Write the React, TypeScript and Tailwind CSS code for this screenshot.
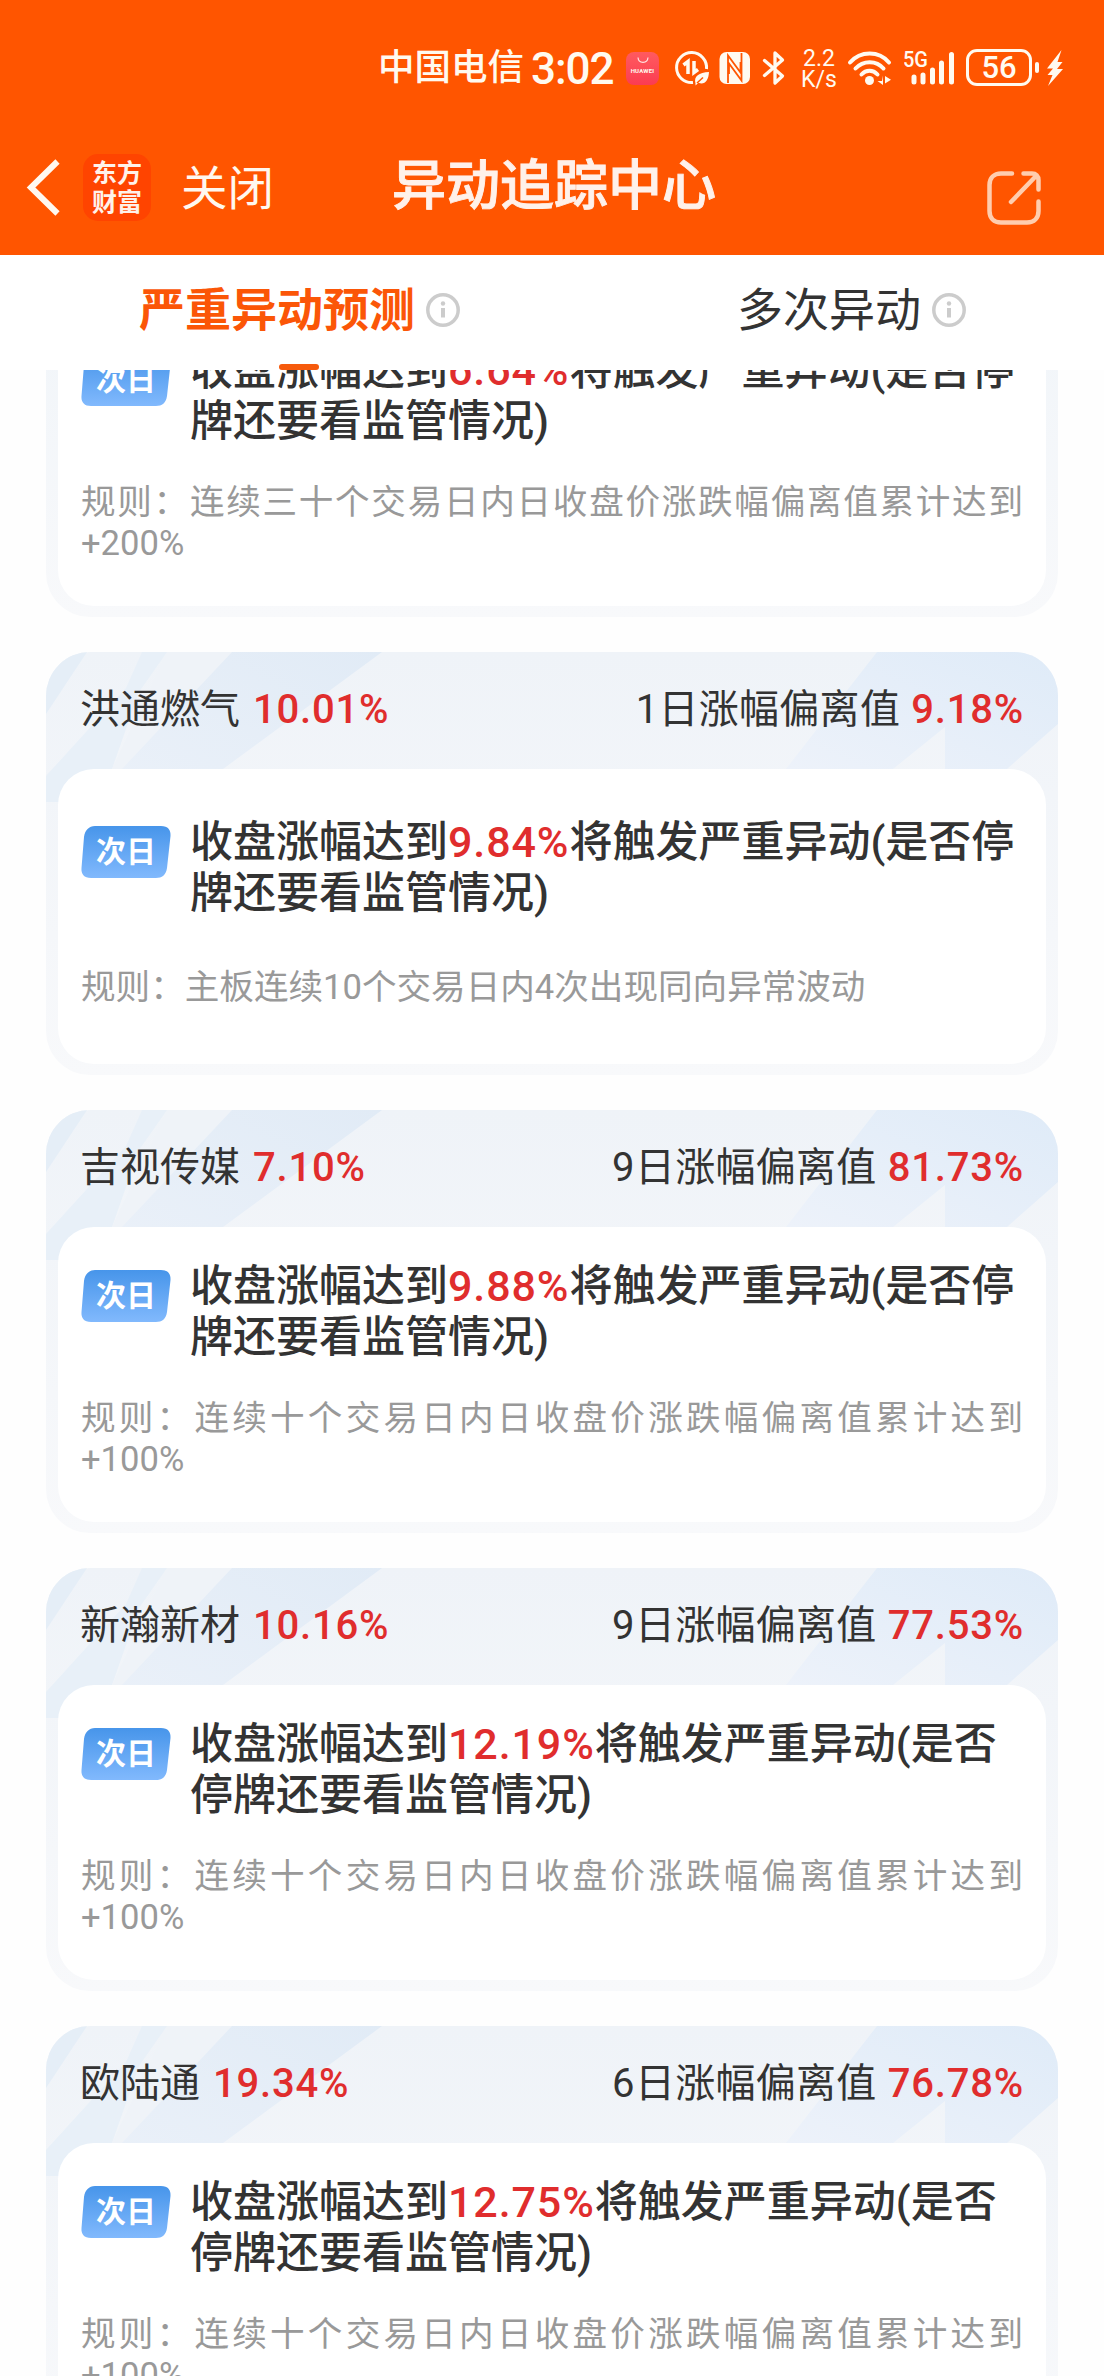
import React from 'react';

// One stock card in the list
interface StockAlert {
  name: string;
  change: string;
  days: number;
  deviation: string;
  trigger: string;
  rule: string;
}

// The card on top is scrolled under the tabs, only its body is visible
const SCROLLED_ALERT = {
  trigger: '6.64%',
  rule: '连续三十个交易日内日收盘价涨跌幅偏离值累计达到+200%',
};

const ALERTS: StockAlert[] = [
  { name: '洪通燃气', change: '10.01%', days: 1, deviation: '9.18%', trigger: '9.84%', rule: '主板连续10个交易日内4次出现同向异常波动' },
  { name: '吉视传媒', change: '7.10%', days: 9, deviation: '81.73%', trigger: '9.88%', rule: '连续十个交易日内日收盘价涨跌幅偏离值累计达到+100%' },
  { name: '新瀚新材', change: '10.16%', days: 9, deviation: '77.53%', trigger: '12.19%', rule: '连续十个交易日内日收盘价涨跌幅偏离值累计达到+100%' },
  { name: '欧陆通', change: '19.34%', days: 6, deviation: '76.78%', trigger: '12.75%', rule: '连续十个交易日内日收盘价涨跌幅偏离值累计达到+100%' },
];

const StatusBar: React.FC = () => (
  <div className="flex h-[135px] items-center pl-[378px] font-medium text-[#fffaf0]">
    <span className="mt-[2px] w-[153px] whitespace-nowrap text-[36.5px] leading-none">中国电信</span>
    <span className="mt-[2px] w-[95px] whitespace-nowrap text-[44px] leading-none tracking-[-1px]">3:02</span>

    {/* Huawei store */}
    <div className="mt-[2px] flex h-[33px] w-[33px] flex-col items-center rounded-[8px] bg-linear-to-b from-[#ff5a5f] to-[#fb3b52]">
      <svg className="mt-[5px]" width="12" height="7" viewBox="0 0 12 7" fill="none" stroke="#ffe3e0" strokeWidth="1.2">
        <path d="M1 0.5C1.5 7 10.500 7 11 0.5" />
      </svg>
      <span className="mt-[4px] text-[6px] font-bold leading-none tracking-[0.2px]">HUAWEI</span>
    </div>

    {/* Data saver */}
    <svg className="ml-[15px]" width="36" height="36" viewBox="0 0 36 36" fill="none" stroke="currentColor" strokeWidth="3">
      <path d="M19 32.500A15 15 0 1 1 32.500 19" />
      <path d="M9.500 15L14 11.500V24" strokeWidth="3.500" />
      <path d="M20 11V22.500L24 19.500" strokeWidth="3.500" />
      <path d="M21.500 33.500C19.500 26 25 22.500 35 22C34.500 31 30.500 35 24.500 32.800L21.500 35.500Z" fill="currentColor" stroke="none" />
      <path d="M23 33L29 27.500" stroke="#ff5500" strokeWidth="1.500" />
    </svg>

    {/* NFC */}
    <svg className="ml-[9px]" width="32" height="34" viewBox="0 0 32 34">
      <rect x="0.500" y="1" width="30.500" height="32" rx="7" fill="currentColor" />
      <path d="M9 32V4.500L21.500 21.500V11M22.500 2V29.500L10 12.500V23" stroke="#ff5500" strokeWidth="1.800" fill="none" />
    </svg>

    {/* Bluetooth */}
    <svg className="ml-[11px]" width="24" height="36" viewBox="0 0 24 36" fill="none" stroke="currentColor" strokeWidth="3.300" strokeLinejoin="round" strokeLinecap="round">
      <path d="M2.500 10.500L20.500 26L13 33V3L20.500 10L2.500 25.500" />
    </svg>

    <div className="ml-[14px] mt-[3px] w-[38px] text-center text-[23px] font-normal leading-[21px]">
      <div>2.2</div>
      <div>K/s</div>
    </div>

    {/* Wifi */}
    <svg className="ml-[9px]" width="46" height="36" viewBox="0 0 46 36" fill="none" stroke="currentColor" strokeWidth="4" strokeLinecap="round">
      <path d="M3 12.500C13.500 0.500 32 0.500 42 12.500" />
      <path d="M8.500 18.500C16 10 29.500 10 36.500 18.500" />
      <path d="M14.500 24.500C19 19.500 26 19.500 30.500 24.500" />
      <circle cx="22.500" cy="30.500" r="4.500" fill="currentColor" stroke="none" />
      <path d="M36 25.500V35L30.500 31H35M38 35V26L44 29.800L38 33.500Z" fill="currentColor" stroke="none" />
    </svg>

    {/* Signal */}
    <svg className="ml-[11px]" width="52" height="37" viewBox="0 0 52 37" fill="none" stroke="currentColor" strokeWidth="5" strokeLinecap="round">
      <text x="-1" y="18" fontSize="22.500" fill="currentColor" stroke="none" textLength="25" lengthAdjust="spacingAndGlyphs">5G</text>
      <path d="M10 28V33M19 26V33M28.500 21V33M37.500 14V33M47.500 5.500V33" />
    </svg>

    {/* Battery */}
    <div className="ml-[10px] flex h-[37px] w-[66px] items-center justify-center rounded-[11px] border-3 border-current text-[31px] font-medium leading-none">56</div>
    <div className="ml-[3px] h-[11px] w-[4px] rounded-full bg-current" />
    <svg className="ml-[7px]" width="18" height="38" viewBox="0 0 18 38" fill="currentColor">
      <path d="M15.500 1L1 19.500H7L1.500 26H6.500L2 37L17 20H11L16.500 13H11.500Z" />
    </svg>
  </div>
);

const NavBar: React.FC = () => (
  <div className="grid h-[120px] grid-cols-[392px_1fr_392px]">
    <div className="flex pl-[24px]">
      <svg className="mt-[23px]" width="36" height="58" viewBox="0 0 36 58" fill="none" stroke="#fff8ef" strokeWidth="6">
        <path d="M33.500 3.500L7 29.500L33.500 55.500" />
      </svg>
      <div className="ml-[23px] mt-[19px] flex h-[67px] w-[68px] flex-col items-center justify-center rounded-[15px] bg-[#ff4400] text-[25px] font-bold leading-[29px] text-[#fff2ea]">
        <span>东方</span>
        <span>财富</span>
      </div>
      <span className="ml-[30px] mt-[31px] whitespace-nowrap text-[46.5px] leading-[46px] text-[#fff8ef]">关闭</span>
    </div>
    <h1 className="mt-[25px] whitespace-nowrap text-center text-[54px] font-medium leading-[54px] text-[#fff1ea] [-webkit-text-stroke:0.9px_#fff1ea]">异动追踪中心</h1>
    <div className="flex justify-end pr-[65px]">
      <svg className="mt-[35px]" width="56" height="56" viewBox="0 0 56 56" fill="none" stroke="#ffcdae" strokeWidth="4.500" strokeLinecap="round" strokeLinejoin="round">
        <path d="M25 3.500H14C7 3.500 2.500 8 2.500 15V41C2.500 48 7 52.500 14 52.500H40C47 52.500 51.500 48 51.500 41V31.500" />
        <path d="M36.500 3.500H45C49 3.500 51.500 6 51.500 10V19.500M49.500 5.500L24 32" />
      </svg>
    </div>
  </div>
);

const InfoIcon: React.FC = () => (
  <svg className="ml-[10px] mt-[5px]" width="36" height="36" viewBox="0 0 36 36" fill="none" stroke="#cccccc" strokeWidth="3.500">
    <circle cx="18" cy="18" r="15.200" />
    <path d="M18 16V25.500" strokeWidth="4" />
    <circle cx="18" cy="11.500" r="2.200" fill="#cccccc" stroke="none" />
  </svg>
);

const Tabs: React.FC = () => (
  <div className="relative z-10 flex h-[115px] bg-white text-[46px] leading-[46px]">
    <div className="flex w-[600px] flex-col pl-[139px]">
      <div className="mt-[32px] flex text-[#fb5607]">
        <span className="font-bold">严重异动预测</span>
        <InfoIcon />
      </div>
      <div className="ml-[140px] mt-auto h-[6px] w-[40px] rounded-full bg-[#f65a0c]" />
    </div>
    <div className="flex pl-[137px] pt-[32px] text-[#333333]">
      <span>多次异动</span>
      <InfoIcon />
    </div>
  </div>
);

// Pale diagonal rays behind the card header
const CardRays: React.FC = () => (
  <svg className="absolute inset-0" width="1012" height="150" viewBox="0 0 1012 150">
    <defs>
      <linearGradient id="rayRight" x1="1" y1="0" x2="0" y2="1">
        <stop offset="0" stopColor="#dfebf8" />
        <stop offset="1" stopColor="#edf2fa" />
      </linearGradient>
      <linearGradient id="rayLeft" x1="1" y1="0" x2="0" y2="1">
        <stop offset="0" stopColor="#e1ebf6" />
        <stop offset="1" stopColor="#ebf1f9" />
      </linearGradient>
    </defs>
    <path d="M0 0H41L0 62Z" fill="#e5eef7" />
    <path d="M96 0H121L93 40L66 117L60 150H0V124L80 36Z" fill="#e8f0f8" />
    <path d="M121 0L66 117H80L186 0Z" fill="#eff3f8" />
    <path d="M186 0H336L177 117L130 150H60L76 117Z" fill="url(#rayLeft)" />
    <path d="M831 0H1012V72L961 117H899V75L847 117H740Z" fill="url(#rayRight)" />
  </svg>
);

const NextDayBadge: React.FC = () => (
  <div className="relative mt-[9px] flex h-[52px] w-[90px] shrink-0 items-center justify-center">
    <svg className="absolute inset-0" width="90" height="52" viewBox="0 0 90 52">
      <defs>
        <linearGradient id="badge" x1="0" y1="0" x2="0" y2="1">
          <stop offset="0" stopColor="#4795ea" />
          <stop offset="1" stopColor="#81b9fd" />
        </linearGradient>
      </defs>
      <path d="M14 0H80C87 0 90 4 89.500 10L86 42C85 49 81 52 75 52H10C3 52 0 48 0.500 42L3 11C4 4 8 0 14 0Z" fill="url(#badge)" />
    </svg>
    <span className="relative text-[30px] font-bold leading-none text-white">次日</span>
  </div>
);

const AlertBody: React.FC<{ trigger: string; rule: string }> = ({ trigger, rule }) => (
  <div className="relative flex h-[295px] flex-col justify-evenly rounded-[36px] bg-white px-[23px] pb-[8px]">
    <div className="flex gap-[19px]">
      <NextDayBadge />
      <p className="-mr-[4px] text-[43px] font-medium leading-[51px] text-[#333333]">
        收盘涨幅达到<span className="tracking-[0.9px] text-[#e02d2d]">{trigger}</span>将触发严重异动(是否停牌还要看监管情况)
      </p>
    </div>
    <p className="text-justify text-[34.600px] leading-[41px] text-[#999999]">规则：{rule}</p>
  </div>
);

const AlertCard: React.FC<{ alert: StockAlert }> = ({ alert }) => (
  <div className="relative h-[423px] shrink-0 overflow-hidden rounded-[44px] bg-linear-to-b from-[#eff3f8] to-[#f8f9fb] px-[12px]">
    <CardRays />
    <div className="relative flex h-[117px] items-center justify-between px-[22px] pb-[2px] text-[40px] text-[#333333]">
      <div className="flex gap-[13px]">
        <span>{alert.name}</span>
        <span className="font-medium tracking-[0.8px] text-[#e02d2d]">{alert.change}</span>
      </div>
      <div className="flex gap-[11px]">
        <span className="tracking-[0.3px]">{alert.days}日涨幅偏离值</span>
        <span className="font-medium tracking-[0.8px] text-[#e02d2d]">{alert.deviation}</span>
      </div>
    </div>
    <AlertBody trigger={alert.trigger} rule={alert.rule} />
  </div>
);

const App: React.FC = () => {
  return (
    <div lang="zh-CN" className="flex h-[2376px] w-[1104px] flex-col overflow-hidden bg-[#fefefe] font-['Roboto','Noto_Sans_CJK_SC',sans-serif]">
      <header className="h-[255px] shrink-0 bg-[#ff5500]">
        <StatusBar />
        <NavBar />
      </header>
      <Tabs />
      <main className="flex min-h-0 flex-1 flex-col overflow-hidden px-[46px]">
        <div className="-mt-[59px] flex flex-col gap-[35px]">
          <div className="rounded-b-[44px] bg-linear-to-b from-[#f1f5f9] to-[#f8f9fb] px-[12px] pb-[11px]">
            <AlertBody trigger={SCROLLED_ALERT.trigger} rule={SCROLLED_ALERT.rule} />
          </div>
          {ALERTS.map(alert => (
            <AlertCard key={alert.name} alert={alert} />
          ))}
        </div>
      </main>
    </div>
  );
};

export default App;
